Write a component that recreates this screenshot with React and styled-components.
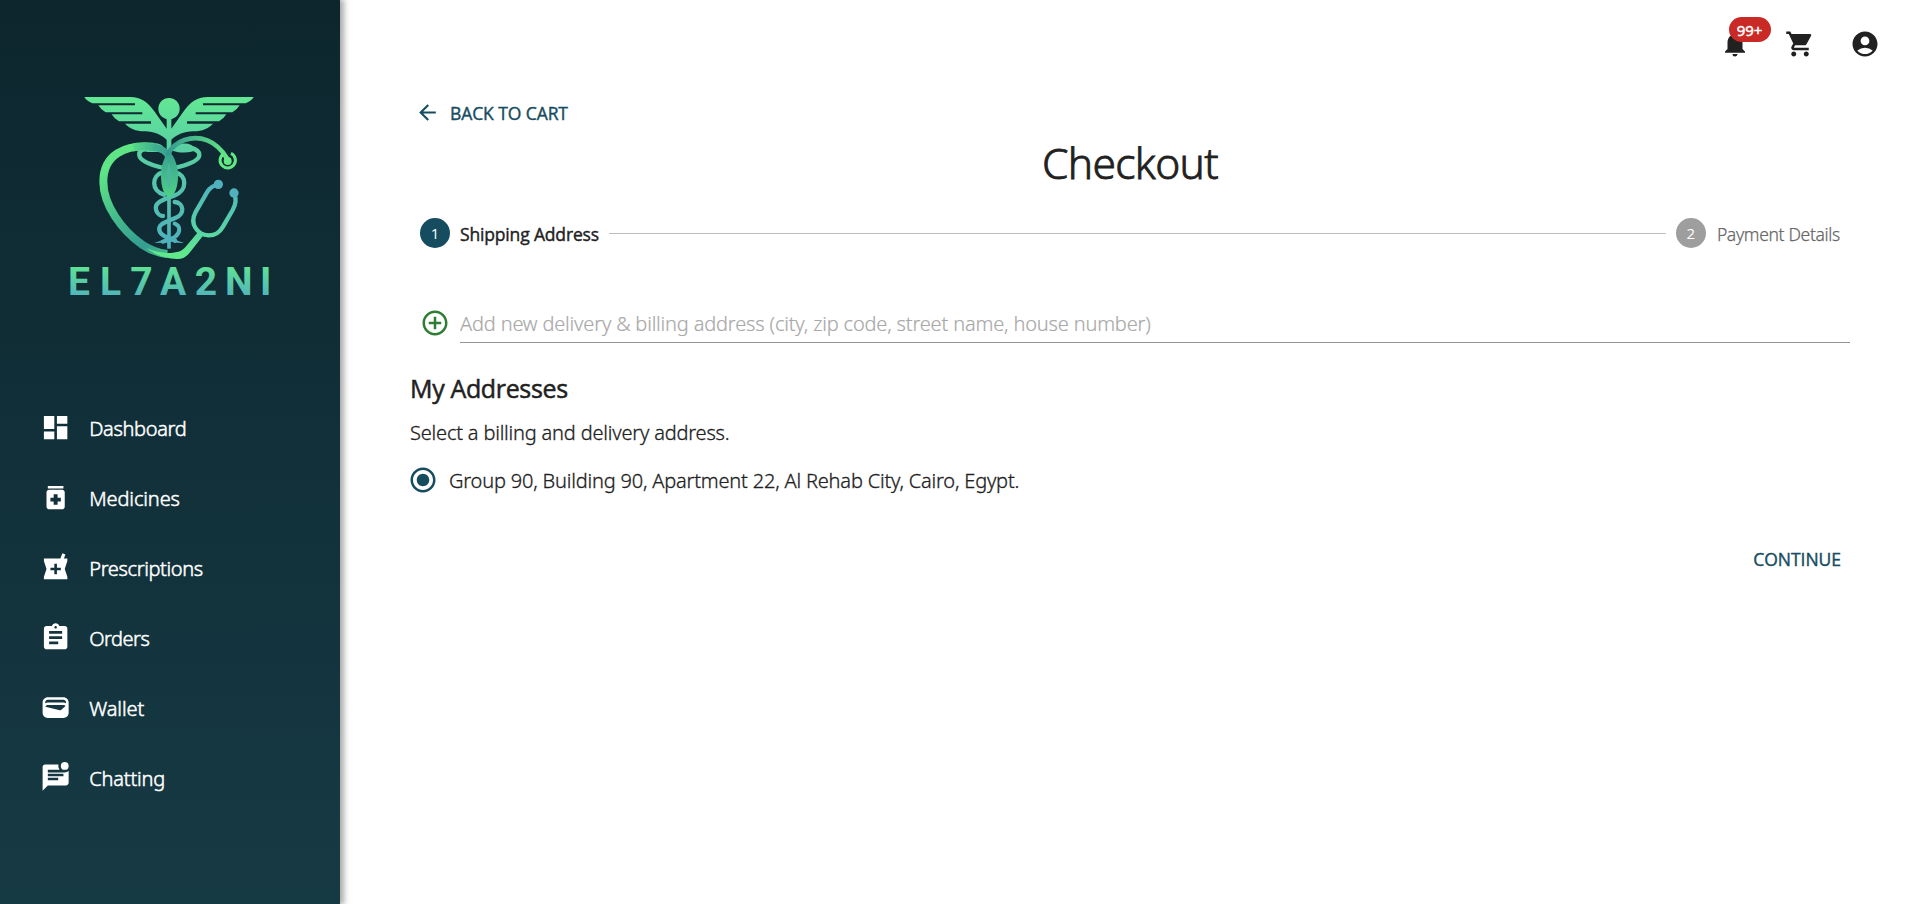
import React from "react";
import styled, { createGlobalStyle } from "styled-components";
import {
  MdDashboard,
  MdMedication,
  MdLocalPharmacy,
  MdAssignment,
  MdWallet,
  MdMarkUnreadChatAlt,
  MdNotifications,
  MdShoppingCart,
  MdAccountCircle,
  MdArrowBack,
  MdControlPoint,
  MdRadioButtonChecked,
} from "react-icons/md";

const light = '"Noto Sans", "Open Sans", sans-serif';
const medium = '"Open Sans", "Noto Sans", sans-serif';

const GlobalStyle = createGlobalStyle`
  *, *::before, *::after { box-sizing: border-box; }
  body {
    margin: 0;
    background: #fff;
    color: #212121;
    font-family: ${light};
    font-weight: 300;
    overflow: hidden;
  }
  svg { display: block; flex-shrink: 0; }
`;

const Page = styled.div`
  display: flex;
  height: 904px;
`;

const Sidebar = styled.aside`
  width: 340px;
  flex-shrink: 0;
  background: linear-gradient(180deg, #0d262e 0%, #163a44 100%);
  box-shadow: 3px 0 6px 1px rgba(0, 0, 0, 0.34);
`;

const Brand = styled.div`
  padding: 80px 0 0 50px;
  height: 393px;
`;

const Nav = styled.nav`
  display: flex;
  flex-direction: column;
`;

const NavItem = styled.a`
  display: flex;
  align-items: center;
  gap: 18px;
  height: 70px;
  padding-left: 40px;
  color: #fff;
  font-size: 20px;
  letter-spacing: ${(p) => p.$tracking}px;
  -webkit-text-stroke: 0.5px currentColor;

  svg { stroke-width: 0; }
`;

const Main = styled.main`
  flex: 1;
  display: flex;
  flex-direction: column;
  padding: 0 70px;
`;

const TopBar = styled.header`
  display: flex;
  justify-content: flex-end;
  gap: 35px;
  height: 91px;
  padding-top: 29px;
  margin-right: -30px;
`;

const BarIcon = styled.div`
  position: relative;
  width: 30px;
  height: 30px;
`;

const Badge = styled.span`
  position: absolute;
  left: 9px;
  top: -12px;
  width: 42px;
  height: 25px;
  border-radius: 13px;
  background: #c92a26;
  color: #fff;
  font: 400 15px/26px ${medium};
  text-align: center;
  text-indent: -1px;
  -webkit-text-stroke: 0.5px #fff;
`;

const TextButton = styled.button`
  display: flex;
  align-items: center;
  gap: 10px;
  height: 45px;
  border: 0;
  background: none;
  color: #164c5f;
  font: 400 17.5px ${medium};
  letter-spacing: ${(p) => p.$tracking}px;
  -webkit-text-stroke: 0.4px currentColor;
  align-self: ${(p) => (p.$end ? "flex-end" : "flex-start")};
  padding: ${(p) => (p.$end ? "0 9px 2px 0" : "0 5px 2px")};
  margin-top: ${(p) => (p.$end ? 42 : 0)}px;

  svg { stroke-width: 0; }
`;

const Title = styled.h1`
  margin: 0;
  height: 54px;
  line-height: 54px;
  text-align: center;
  font-size: 42.5px;
  font-weight: 300;
  letter-spacing: -0.66px;
  -webkit-text-stroke: 0.8px currentColor;
`;

const Stepper = styled.div`
  display: flex;
  align-items: center;
  margin-top: 28px;
  height: 30px;
  padding: 0 10px;
`;

const StepDot = styled.span`
  width: 30px;
  height: 30px;
  border-radius: 50%;
  background: ${(p) => (p.$active ? "#164c5f" : "#9e9e9e")};
  color: #fff;
  font: 400 15px/30px ${medium};
  text-align: center;
`;

const StepLabel = styled.span`
  margin-left: ${(p) => (p.$active ? 10 : 11)}px;
  line-height: 32px;
  padding-top: 2px;
  font-size: 17.5px;
  white-space: nowrap;
  font-family: ${(p) => (p.$active ? medium : light)};
  font-weight: ${(p) => (p.$active ? 400 : 300)};
  letter-spacing: ${(p) => (p.$active ? -0.16 : -0.32)}px;
  color: ${(p) => (p.$active ? "#212121" : "#666")};
  -webkit-text-stroke: ${(p) => (p.$active ? 0.4 : 0.25)}px currentColor;
`;

const StepLine = styled.span`
  flex: 1;
  height: 1px;
  margin: 0 10px;
  background: #bdbdbd;
`;

const AddressField = styled.label`
  display: flex;
  gap: 10px;
  height: 35px;
  margin-top: 60px;
  padding-left: 10px;
  color: #2e7d32;
`;

const AddressInput = styled.input`
  flex: 1;
  border: 0;
  border-bottom: 1px solid #949494;
  padding: 0 0 3px;
  outline: 0;
  background: none;
  font: 300 20px ${light};
  letter-spacing: -0.17px;

  &::placeholder {
    color: #a9a9a9;
    opacity: 1;
    -webkit-text-stroke: 0.2px currentColor;
  }
`;

const SectionTitle = styled.h2`
  margin: 25px 0 0;
  height: 40px;
  font: 400 25px/40px ${medium};
  letter-spacing: -0.35px;
  -webkit-text-stroke: 0.5px currentColor;
`;

const BodyText = styled.p`
  margin: 10px 0 0;
  height: 30px;
  font-size: 20px;
  line-height: 29px;
  letter-spacing: -0.19px;
  -webkit-text-stroke: 0.3px currentColor;
`;

const AddressOption = styled.div`
  display: flex;
  align-items: center;
  gap: 11px;
  height: 30px;
  margin: 17px 0 0 -2px;
  font-size: 20px;
  letter-spacing: -0.19px;
  -webkit-text-stroke: 0.3px currentColor;

  svg { color: #164c5f; stroke-width: 0; }
`;

const LogoText = styled.text`
  font: 700 117px Roboto, sans-serif;
`;

const WING =
  "M103 51H240C275 52 292 65 314 95L349 145L357 150V185C335 164 312 154 285 154C255 153 240 146 225 131H303V124H207Q193 117 185 103H277V97H167Q153 90 145 76H255V70H127Q110 63 103 51Z";

function Logo() {
  return (
    <svg width="240" height="230" viewBox="0 0 720 690" fill="none" strokeLinecap="round">
      <defs>
        <linearGradient id="wing" gradientUnits="userSpaceOnUse" x1="0" y1="50" x2="0" y2="210">
          <stop offset="0" stopColor="#62e893" />
          <stop offset="1" stopColor="#58cfa4" />
        </linearGradient>
        <linearGradient id="snake" gradientUnits="userSpaceOnUse" x1="0" y1="190" x2="0" y2="500">
          <stop offset="0" stopColor="#5bd29f" />
          <stop offset="1" stopColor="#4eb0bd" />
        </linearGradient>
        <linearGradient id="heart" gradientUnits="userSpaceOnUse" x1="160" y1="270" x2="330" y2="520">
          <stop offset="0" stopColor="#5fe585" />
          <stop offset="0.45" stopColor="#45bd8b" />
          <stop offset="0.85" stopColor="#349c92" />
          <stop offset="1" stopColor="#40b58b" />
        </linearGradient>
        <linearGradient id="arch" gradientUnits="userSpaceOnUse" x1="230" y1="0" x2="365" y2="0">
          <stop offset="0" stopColor="#5fe585" />
          <stop offset="0.65" stopColor="#3eae90" />
          <stop offset="1" stopColor="#369c91" />
        </linearGradient>
        <linearGradient id="tube" gradientUnits="userSpaceOnUse" x1="350" y1="0" x2="540" y2="0">
          <stop offset="0" stopColor="#35988f" />
          <stop offset="1" stopColor="#62e884" />
        </linearGradient>
        <linearGradient id="leaf" gradientUnits="userSpaceOnUse" x1="0" y1="215" x2="0" y2="350">
          <stop offset="0" stopColor="#37a08e" />
          <stop offset="1" stopColor="#4fd087" />
        </linearGradient>
        <linearGradient id="ears" gradientUnits="userSpaceOnUse" x1="0" y1="310" x2="0" y2="520">
          <stop offset="0" stopColor="#50b1bd" />
          <stop offset="0.7" stopColor="#59d5a5" />
          <stop offset="1" stopColor="#62e88c" />
        </linearGradient>
        <linearGradient id="word" gradientUnits="userSpaceOnUse" x1="0" y1="562" x2="0" y2="646">
          <stop offset="0" stopColor="#5fe096" />
          <stop offset="1" stopColor="#52b6b8" />
        </linearGradient>
      </defs>

      <g fill="url(#wing)">
        <path d={WING} />
        <path d={WING} transform="translate(714 0) scale(-1 1)" />
        <circle cx="357" cy="86" r="32" />
        <path d="M350 110h14v110h-14z" />
        <path d="M286 197C305 186 334 187 344 206L340 216H290Z" />
        <path d="M368 212C380 187 420 182 440 208C425 220 390 220 368 212Z" />
      </g>

      <g stroke="url(#snake)" strokeWidth="13">
        <path d="M340 264C315 258 270 246 268 226C265 204 290 207 310 209" />
        <path d="M374 264C400 258 446 246 448 226C449 214 438 207 420 204" />
        <path d="M338 277C305 285 302 333 342 344" />
        <path d="M376 277C412 285 412 333 374 346C330 362 311 370 319 392C323 403 333 408 339 408" />
        <path d="M374 366C402 368 406 402 376 414C335 430 320 436 331 458C337 468 352 474 375 482" />
        <path d="M374 431C393 438 391 458 376 470C366 477 350 483 338 485" strokeWidth="12" />
        <path d="M357 350V506" strokeWidth="11" strokeLinecap="butt" />
      </g>
      <path d="M313 489Q345 480 357 466Q370 480 402 489Q370 490 357 481Q345 490 313 489Z" fill="#4fb1bb" />

      <path
        d="M310 200C225 192 160 225 160 305C160 375 215 450 275 493C300 510 325 519 352 522"
        stroke="url(#heart)"
        strokeWidth="24"
        strokeLinecap="butt"
      />
      <path d="M250 190C305 184 350 195 363 222C372 236 372 258 366 275L348 250C352 229 335 215 310 213C285 210 265 209 250 214Z" fill="url(#arch)" />
      <path
        d="M290 505C325 518 350 523 385 515C395 512 400 507 407 500L445 455L459 467L420 517C410 530 398 538 380 537C345 536 315 524 290 505Z"
        fill="url(#ears)"
      />
      <path d="M357 212C375 232 384 258 384 287C384 322 374 345 358 353C341 345 333 320 333 287C333 256 342 232 357 212Z" fill="url(#leaf)" />
      <path d="M357 250C365 275 365 302 357 328C349 302 349 275 357 250Z" fill="#4cb7a0" />

      <path d="M354 222C375 183 425 163 472 181C502 193 517 212 530 234" stroke="url(#tube)" strokeWidth="14" />
      <path d="M543 220A23 23 0 1 1 520 222" stroke="#62e884" strokeWidth="9" strokeLinecap="butt" />
      <circle cx="533" cy="243" r="12" fill="#62e884" />

      <path
        d="M500 315C478 320 472 335 463 351L436 398C419 430 440 464 476 466C497 466 508 459 519 440L548 390C559 370 558 358 554 342"
        stroke="url(#ears)"
        strokeWidth="13"
      />
      <circle cx="505" cy="313" r="14" fill="#50b1bd" />
      <circle cx="552" cy="339" r="14" fill="#50b1bd" />

      <LogoText y="646" x="54 150 241 330 434 525 630" fill="url(#word)">
        EL7A2NI
      </LogoText>
    </svg>
  );
}

const links = [
  { label: "Dashboard", icon: MdDashboard, tracking: -0.35 },
  { label: "Medicines", icon: MdMedication, tracking: -0.12 },
  { label: "Prescriptions", icon: MdLocalPharmacy, tracking: -0.36 },
  { label: "Orders", icon: MdAssignment, tracking: -0.5 },
  { label: "Wallet", icon: MdWallet, tracking: -0.1 },
  { label: "Chatting", icon: MdMarkUnreadChatAlt, tracking: -0.18 },
];

export default function App() {
  return (
    <>
      <GlobalStyle />
      <Page>
        <Sidebar>
          <Brand>
            <Logo />
          </Brand>
          <Nav>
            {links.map(({ label, icon: Icon, tracking }) => (
              <NavItem key={label} $tracking={tracking}>
                <Icon size={31.25} />
                {label}
              </NavItem>
            ))}
          </Nav>
        </Sidebar>
        <Main>
          <TopBar>
            <BarIcon>
              <MdNotifications size={30} />
              <Badge>99+</Badge>
            </BarIcon>
            <BarIcon>
              <MdShoppingCart size={30} />
            </BarIcon>
            <BarIcon>
              <MdAccountCircle size={30} />
            </BarIcon>
          </TopBar>
          <TextButton $tracking={-0.09}>
            <MdArrowBack size={25} />
            BACK TO CART
          </TextButton>
          <Title>Checkout</Title>
          <Stepper>
            <StepDot $active>1</StepDot>
            <StepLabel $active>Shipping Address</StepLabel>
            <StepLine />
            <StepDot>2</StepDot>
            <StepLabel>Payment Details</StepLabel>
          </Stepper>
          <AddressField>
            <MdControlPoint size={30} />
            <AddressInput placeholder="Add new delivery & billing address (city, zip code, street name, house number)" />
          </AddressField>
          <SectionTitle>My Addresses</SectionTitle>
          <BodyText>Select a billing and delivery address.</BodyText>
          <AddressOption>
            <MdRadioButtonChecked size={30} />
            Group 90, Building 90, Apartment 22, Al Rehab City, Cairo, Egypt.
          </AddressOption>
          <TextButton $end $tracking={-0.04}>
            CONTINUE
          </TextButton>
        </Main>
      </Page>
    </>
  );
}
